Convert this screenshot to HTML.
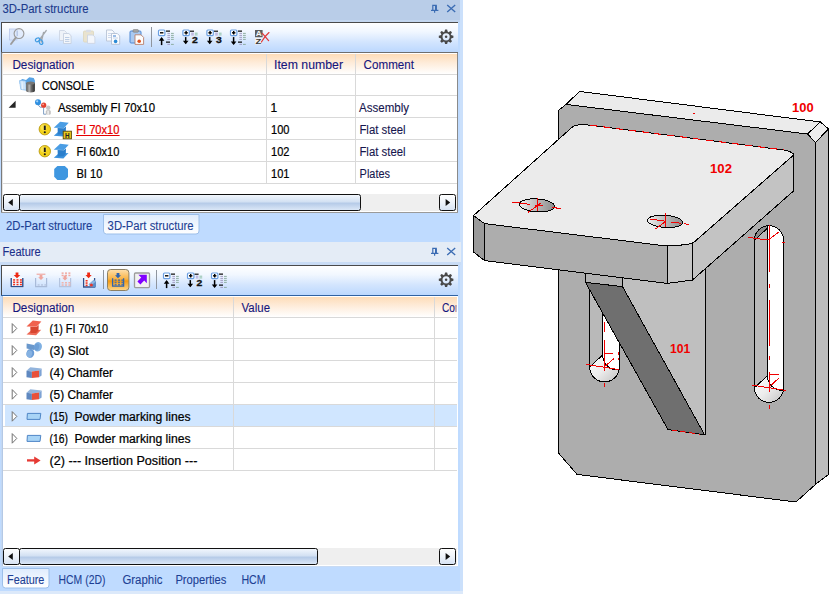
<!DOCTYPE html>
<html><head><meta charset="utf-8">
<style>
html,body{margin:0;padding:0;width:830px;height:594px;overflow:hidden;background:#fff}
svg{display:block;font-family:"Liberation Sans",sans-serif}
text{white-space:pre}
</style></head><body>
<svg width="830" height="594" viewBox="0 0 830 594">
<defs>
<linearGradient id="tbg" x1="0" y1="0" x2="0" y2="1"><stop offset="0" stop-color="#ffffff"/><stop offset="0.3" stop-color="#f1f7ff"/><stop offset="0.65" stop-color="#d3e5fe"/><stop offset="1" stop-color="#bcd8fe"/></linearGradient>
<linearGradient id="hdg" x1="0" y1="0" x2="0" y2="1"><stop offset="0" stop-color="#fddcb8"/><stop offset="0.45" stop-color="#feecda"/><stop offset="1" stop-color="#ffffff"/></linearGradient>
<linearGradient id="thumb" x1="0" y1="0" x2="0" y2="1"><stop offset="0" stop-color="#f4f8fd"/><stop offset="0.45" stop-color="#d3e1f3"/><stop offset="0.55" stop-color="#b6cbe8"/><stop offset="1" stop-color="#dde9f8"/></linearGradient>
<linearGradient id="sbtn" x1="0" y1="0" x2="0" y2="1"><stop offset="0" stop-color="#ffffff"/><stop offset="0.5" stop-color="#eef3fa"/><stop offset="1" stop-color="#d6e2f3"/></linearGradient>
<linearGradient id="tabg" x1="0" y1="0" x2="0" y2="1"><stop offset="0" stop-color="#dfecfd"/><stop offset="1" stop-color="#ffffff"/></linearGradient>
<linearGradient id="org" x1="0" y1="0" x2="0" y2="1"><stop offset="0" stop-color="#fde0ae"/><stop offset="0.45" stop-color="#f9b344"/><stop offset="0.55" stop-color="#f49a12"/><stop offset="1" stop-color="#fdd88e"/></linearGradient>
<linearGradient id="holeg" x1="0" y1="0" x2="1" y2="0"><stop offset="0" stop-color="#f0f0f0"/><stop offset="0.35" stop-color="#c8c8c8"/><stop offset="1" stop-color="#8c8c8c"/></linearGradient>
<linearGradient id="slotb" x1="0" y1="0" x2="1" y2="1"><stop offset="0" stop-color="#ffffff"/><stop offset="0.5" stop-color="#ececec"/><stop offset="1" stop-color="#bcbcbc"/></linearGradient>
</defs>

<rect x="0" y="0" width="463" height="594" fill="#bfdbff"/>
<rect x="460" y="0" width="3" height="594" fill="#cbe0fb"/>
<rect x="0" y="591" width="463" height="3" fill="#dce9fa"/>
<rect x="0" y="0" width="460" height="20" fill="#b9cde8"/>
<rect x="0" y="20" width="460" height="2" fill="#c3d6ef"/>
<text x="2.4" y="13.0" font-size="12" fill="#1c3a8c" stroke="#1c3a8c" stroke-width="0.1" textLength="86.2" lengthAdjust="spacingAndGlyphs" >3D-Part structure</text>
<rect x="0" y="242" width="461" height="20" fill="#e4ecf6"/>
<rect x="0" y="262" width="461" height="3" fill="#c9dcf5"/>
<text x="2.5" y="256.0" font-size="12" fill="#1c2f8a" stroke="#1c2f8a" stroke-width="0.1" textLength="38.2" lengthAdjust="spacingAndGlyphs" >Feature</text>
<g fill="none" stroke="#3b6cb3" stroke-width="1.2"><path d="M432.8 10.0V5.3999999999999995H436.2V10.0"/><path d="M435.9 5.3999999999999995V10.0" stroke-width="1.8"/><path d="M431 10.399999999999999H438.4"/><path d="M434.6 10.399999999999999V12.8"/></g>
<path d="M447.2 5L455.2 12M455.2 5L447.2 12" stroke="#3b6cb3" stroke-width="1.35" fill="none"/>
<g fill="none" stroke="#3b6cb3" stroke-width="1.2"><path d="M432.8 253.0V248.4H436.2V253.0"/><path d="M435.9 248.4V253.0" stroke-width="1.8"/><path d="M431 253.4H438.4"/><path d="M434.6 253.4V255.8"/></g>
<path d="M447.2 248L455.2 255M455.2 248L447.2 255" stroke="#3b6cb3" stroke-width="1.35" fill="none"/>
<rect x="2" y="23" width="456" height="29" fill="url(#tbg)"/>
<rect x="1" y="22" width="457" height="1" fill="#4a4a4a"/>
<rect x="1" y="22" width="1" height="31" fill="#4a4a4a"/>
<rect x="1" y="52" width="457" height="1" fill="#6e6e6e"/>
<rect x="2" y="266" width="456" height="29" fill="url(#tbg)"/>
<rect x="1" y="265" width="457" height="1" fill="#4a4a4a"/>
<rect x="1" y="265" width="1" height="31" fill="#4a4a4a"/>
<rect x="1" y="295" width="457" height="1" fill="#2f62a3"/>
<g transform="translate(446.1,36.8)">
<path d="M-1.7 -4.8L-1 -7.3H1L1.7 -4.8Z" fill="#484848" transform="rotate(0)"/>
<path d="M-1.7 -4.8L-1 -7.3H1L1.7 -4.8Z" fill="#484848" transform="rotate(45)"/>
<path d="M-1.7 -4.8L-1 -7.3H1L1.7 -4.8Z" fill="#484848" transform="rotate(90)"/>
<path d="M-1.7 -4.8L-1 -7.3H1L1.7 -4.8Z" fill="#484848" transform="rotate(135)"/>
<path d="M-1.7 -4.8L-1 -7.3H1L1.7 -4.8Z" fill="#484848" transform="rotate(180)"/>
<path d="M-1.7 -4.8L-1 -7.3H1L1.7 -4.8Z" fill="#484848" transform="rotate(225)"/>
<path d="M-1.7 -4.8L-1 -7.3H1L1.7 -4.8Z" fill="#484848" transform="rotate(270)"/>
<path d="M-1.7 -4.8L-1 -7.3H1L1.7 -4.8Z" fill="#484848" transform="rotate(315)"/>
<circle r="4.5" fill="none" stroke="#484848" stroke-width="1.8"/><circle r="1.25" fill="#484848"/></g>
<g transform="translate(446.1,279.8)">
<path d="M-1.7 -4.8L-1 -7.3H1L1.7 -4.8Z" fill="#484848" transform="rotate(0)"/>
<path d="M-1.7 -4.8L-1 -7.3H1L1.7 -4.8Z" fill="#484848" transform="rotate(45)"/>
<path d="M-1.7 -4.8L-1 -7.3H1L1.7 -4.8Z" fill="#484848" transform="rotate(90)"/>
<path d="M-1.7 -4.8L-1 -7.3H1L1.7 -4.8Z" fill="#484848" transform="rotate(135)"/>
<path d="M-1.7 -4.8L-1 -7.3H1L1.7 -4.8Z" fill="#484848" transform="rotate(180)"/>
<path d="M-1.7 -4.8L-1 -7.3H1L1.7 -4.8Z" fill="#484848" transform="rotate(225)"/>
<path d="M-1.7 -4.8L-1 -7.3H1L1.7 -4.8Z" fill="#484848" transform="rotate(270)"/>
<path d="M-1.7 -4.8L-1 -7.3H1L1.7 -4.8Z" fill="#484848" transform="rotate(315)"/>
<circle r="4.5" fill="none" stroke="#484848" stroke-width="1.8"/><circle r="1.25" fill="#484848"/></g>
<rect x="1" y="53" width="457" height="160" fill="#fff"/>
<rect x="1" y="53" width="1" height="160" fill="#7a7a7a"/>
<rect x="2" y="53" width="1" height="160" fill="#e4e4e4"/>
<rect x="457" y="53" width="1" height="160" fill="#8a8a8a"/>
<rect x="1" y="212" width="457" height="1" fill="#9a9a9a"/>
<rect x="3" y="54" width="454" height="20" fill="url(#hdg)"/>
<rect x="3" y="74" width="454" height="1" fill="#d9d9d9"/>
<rect x="3" y="95" width="454" height="1" fill="#d9d9d9"/>
<rect x="3" y="117" width="454" height="1" fill="#d9d9d9"/>
<rect x="3" y="139" width="454" height="1" fill="#d9d9d9"/>
<rect x="3" y="161" width="454" height="1" fill="#d9d9d9"/>
<rect x="3" y="183" width="454" height="1" fill="#d9d9d9"/>
<rect x="266" y="54" width="1" height="130" fill="#d9d9d9"/>
<rect x="355" y="54" width="1" height="130" fill="#d9d9d9"/>
<rect x="1" y="296" width="457" height="271" fill="#fff"/>
<rect x="1" y="296" width="1" height="271" fill="#c3d8f3"/>
<rect x="2" y="296" width="1" height="271" fill="#b4c9e6"/>
<rect x="457" y="296" width="1" height="271" fill="#ffffff"/>
<rect x="1" y="566" width="457" height="1" fill="#c9dbf3"/>
<rect x="3" y="297" width="454" height="20" fill="url(#hdg)"/>
<rect x="5" y="405" width="452" height="21" fill="#d0e6ff"/>
<rect x="3" y="317" width="454" height="1" fill="#d9d9d9"/>
<rect x="3" y="338" width="454" height="1" fill="#d9d9d9"/>
<rect x="3" y="360" width="454" height="1" fill="#d9d9d9"/>
<rect x="3" y="382" width="454" height="1" fill="#d9d9d9"/>
<rect x="3" y="404" width="454" height="1" fill="#d9d9d9"/>
<rect x="3" y="426" width="454" height="1" fill="#d9d9d9"/>
<rect x="3" y="448" width="454" height="1" fill="#d9d9d9"/>
<rect x="3" y="470" width="454" height="1" fill="#d9d9d9"/>
<rect x="233" y="297" width="1" height="174" fill="#d9d9d9"/>
<rect x="434" y="297" width="1" height="174" fill="#d9d9d9"/>
<text x="12.4" y="69.0" font-size="12" fill="#15157c" stroke="#15157c" stroke-width="0.1" textLength="62.0" lengthAdjust="spacingAndGlyphs" >Designation</text>
<text x="274.0" y="69.0" font-size="12" fill="#15157c" stroke="#15157c" stroke-width="0.1" textLength="69.0" lengthAdjust="spacingAndGlyphs" >Item number</text>
<text x="363.6" y="69.0" font-size="12" fill="#15157c" stroke="#15157c" stroke-width="0.1" textLength="50.4" lengthAdjust="spacingAndGlyphs" >Comment</text>
<text x="12.4" y="312.0" font-size="12" fill="#15157c" stroke="#15157c" stroke-width="0.1" textLength="62.0" lengthAdjust="spacingAndGlyphs" >Designation</text>
<text x="241.6" y="312.0" font-size="12" fill="#15157c" stroke="#15157c" stroke-width="0.1" textLength="28.4" lengthAdjust="spacingAndGlyphs" >Value</text>
<clipPath id="cc"><rect x="434" y="297" width="22.4" height="20"/></clipPath>
<text x="442.0" y="312.0" font-size="12" fill="#15157c" stroke="#15157c" stroke-width="0.1" textLength="44.0" lengthAdjust="spacingAndGlyphs" clip-path="url(#cc)">Comment</text>
<text x="42.0" y="90.0" font-size="12" fill="#000" stroke="#000" stroke-width="0.22" textLength="52.0" lengthAdjust="spacingAndGlyphs" >CONSOLE</text>
<text x="58.0" y="112.0" font-size="12" fill="#000" stroke="#000" stroke-width="0.22" textLength="97.0" lengthAdjust="spacingAndGlyphs" >Assembly FI 70x10</text>
<text x="76.2" y="134.0" font-size="12" fill="#e60000" stroke="#e60000" stroke-width="0.22" textLength="43.2" lengthAdjust="spacingAndGlyphs" >FI 70x10</text>
<rect x="76" y="135" width="43.6" height="1" fill="#e60000"/>
<text x="76.4" y="156.0" font-size="12" fill="#000" stroke="#000" stroke-width="0.22" textLength="43.0" lengthAdjust="spacingAndGlyphs" >FI 60x10</text>
<text x="76.4" y="178.0" font-size="12" fill="#000" stroke="#000" stroke-width="0.22" textLength="26.0" lengthAdjust="spacingAndGlyphs" >BI 10</text>
<text x="270.6" y="112" font-size="12" fill="#000" stroke="#000" stroke-width="0.22">1</text>
<text x="271.0" y="134.0" font-size="12" fill="#000" stroke="#000" stroke-width="0.22" textLength="18.4" lengthAdjust="spacingAndGlyphs" >100</text>
<text x="271.0" y="156.0" font-size="12" fill="#000" stroke="#000" stroke-width="0.22" textLength="18.4" lengthAdjust="spacingAndGlyphs" >102</text>
<text x="271.0" y="178.0" font-size="12" fill="#000" stroke="#000" stroke-width="0.22" textLength="18.4" lengthAdjust="spacingAndGlyphs" >101</text>
<text x="359.0" y="112.0" font-size="12" fill="#16164e" stroke="#16164e" stroke-width="0.1" textLength="50.0" lengthAdjust="spacingAndGlyphs" >Assembly</text>
<text x="359.4" y="134.0" font-size="12" fill="#16164e" stroke="#16164e" stroke-width="0.1" textLength="46.2" lengthAdjust="spacingAndGlyphs" >Flat steel</text>
<text x="359.4" y="156.0" font-size="12" fill="#16164e" stroke="#16164e" stroke-width="0.1" textLength="46.2" lengthAdjust="spacingAndGlyphs" >Flat steel</text>
<text x="359.6" y="178.0" font-size="12" fill="#16164e" stroke="#16164e" stroke-width="0.1" textLength="30.4" lengthAdjust="spacingAndGlyphs" >Plates</text>
<text x="49.6" y="333.0" font-size="12" fill="#000" stroke="#000" stroke-width="0.22" textLength="58.4" lengthAdjust="spacingAndGlyphs" >(1) FI 70x10</text>
<text x="49.6" y="355.0" font-size="12" fill="#000" stroke="#000" stroke-width="0.22" textLength="39.0" lengthAdjust="spacingAndGlyphs" >(3) Slot</text>
<text x="49.6" y="377.0" font-size="12" fill="#000" stroke="#000" stroke-width="0.22" textLength="63.4" lengthAdjust="spacingAndGlyphs" >(4) Chamfer</text>
<text x="49.6" y="399.0" font-size="12" fill="#000" stroke="#000" stroke-width="0.22" textLength="63.4" lengthAdjust="spacingAndGlyphs" >(5) Chamfer</text>
<text x="49.6" y="421.0" font-size="12" fill="#000" stroke="#000" stroke-width="0.22" textLength="18.4" lengthAdjust="spacingAndGlyphs" >(15)</text>
<text x="74.4" y="421.0" font-size="12" fill="#000" stroke="#000" stroke-width="0.22" textLength="116.2" lengthAdjust="spacingAndGlyphs" >Powder marking lines</text>
<text x="49.6" y="443.0" font-size="12" fill="#000" stroke="#000" stroke-width="0.22" textLength="18.4" lengthAdjust="spacingAndGlyphs" >(16)</text>
<text x="74.4" y="443.0" font-size="12" fill="#000" stroke="#000" stroke-width="0.22" textLength="116.2" lengthAdjust="spacingAndGlyphs" >Powder marking lines</text>
<text x="49.6" y="465.0" font-size="12" fill="#000" stroke="#000" stroke-width="0.22" textLength="147.8" lengthAdjust="spacingAndGlyphs" >(2) --- Insertion Position ---</text>
<rect x="3" y="194" width="454" height="17" fill="#efefef"/>
<rect x="3.5" y="194.5" width="16" height="16" rx="2" fill="url(#sbtn)" stroke="#111" stroke-width="1"/>
<path d="M8.2 202.5L12.8 199V206Z" fill="#111"/>
<rect x="19.5" y="194.5" width="341.0" height="16" rx="2" fill="url(#thumb)" stroke="#111" stroke-width="1"/>
<rect x="439.5" y="194.5" width="16" height="16" rx="2" fill="url(#sbtn)" stroke="#111" stroke-width="1"/>
<path d="M450.2 202.5L445.6 199V206Z" fill="#111"/>
<rect x="3" y="548" width="454" height="17" fill="#efefef"/>
<rect x="3.5" y="548.5" width="16" height="16" rx="2" fill="url(#sbtn)" stroke="#111" stroke-width="1"/>
<path d="M8.2 556.5L12.8 553V560Z" fill="#111"/>
<rect x="19.5" y="548.5" width="298.0" height="16" rx="2" fill="url(#thumb)" stroke="#111" stroke-width="1"/>
<rect x="439.5" y="548.5" width="16" height="16" rx="2" fill="url(#sbtn)" stroke="#111" stroke-width="1"/>
<path d="M450.2 556.5L445.6 553V560Z" fill="#111"/>
<text x="6.0" y="230.0" font-size="12" fill="#1d3f94" stroke="#1d3f94" stroke-width="0.1" textLength="86.4" lengthAdjust="spacingAndGlyphs" >2D-Part structure</text>
<path d="M103.5 214.5V231Q103.5 234 106.5 234H196Q199 234 199 231V214.5Z" fill="url(#tabg)" stroke="#9dbfe9" stroke-width="1"/>
<text x="107.6" y="230.0" font-size="12" fill="#1d3f94" stroke="#1d3f94" stroke-width="0.1" textLength="86.0" lengthAdjust="spacingAndGlyphs" >3D-Part structure</text>
<path d="M2.5 568.5V585Q2.5 588 5.5 588H46Q49 588 49 585V568.5Z" fill="url(#tabg)" stroke="#9dbfe9" stroke-width="1"/>
<text x="7.0" y="584.0" font-size="12" fill="#1d3f94" stroke="#1d3f94" stroke-width="0.1" textLength="37.4" lengthAdjust="spacingAndGlyphs" >Feature</text>
<text x="58.6" y="584.0" font-size="12" fill="#1d3f94" stroke="#1d3f94" stroke-width="0.1" textLength="46.8" lengthAdjust="spacingAndGlyphs" >HCM (2D)</text>
<text x="122.4" y="584.0" font-size="12" fill="#1d3f94" stroke="#1d3f94" stroke-width="0.1" textLength="40.0" lengthAdjust="spacingAndGlyphs" >Graphic</text>
<text x="175.4" y="584.0" font-size="12" fill="#1d3f94" stroke="#1d3f94" stroke-width="0.1" textLength="51.0" lengthAdjust="spacingAndGlyphs" >Properties</text>
<text x="241.4" y="584.0" font-size="12" fill="#1d3f94" stroke="#1d3f94" stroke-width="0.1" textLength="24.2" lengthAdjust="spacingAndGlyphs" >HCM</text>
<rect x="9.5" y="29" width="7.5" height="11" fill="#dbe6fa" stroke="#b8c8ea" stroke-width="0.8"/>
<circle cx="19" cy="33.6" r="4.9" fill="#dfeafc" fill-opacity="0.75" stroke="#9a9a9a" stroke-width="1.15"/>
<path d="M15.8 37.6L11 44" stroke="#9c9c9c" stroke-width="1.9" stroke-linecap="round"/>
<path d="M17.2 30.6V36" stroke="#9ab0d8" stroke-width="0.8"/>
<path d="M46.2 30.6L39 40.4M43.6 32.4L41.2 42" stroke="#a3a7ab" stroke-width="1.4" stroke-linecap="round"/>
<ellipse cx="37.6" cy="39.8" rx="2.3" ry="1.7" fill="none" stroke="#3f9be2" stroke-width="1.15" transform="rotate(-30 37.6 39.8)"/>
<ellipse cx="41" cy="42.2" rx="1.7" ry="2.3" fill="none" stroke="#3f9be2" stroke-width="1.15" transform="rotate(-20 41 42.2)"/>
<path d="M59.5 30.5h5l2 2v8h-7z" fill="#eef2f8" stroke="#cdd6e4" stroke-width="0.9"/>
<path d="M63.5 33.5h5.4l2.2 2.2v7.8h-7.6z" fill="#f4f7fb" stroke="#c5cfdf" stroke-width="0.9"/>
<path d="M65 37.5h4.4M65 39.5h4.4M65 41.4h4.4" stroke="#b5c7e2" stroke-width="0.9"/>
<rect x="83.5" y="31" width="10" height="11" rx="1" fill="#e9e3cf" stroke="#dcd5bd" stroke-width="0.8"/>
<rect x="86" y="29.8" width="5" height="2.4" rx="0.8" fill="#d9dde6"/>
<path d="M87.5 35h5.4l2 2v6.4h-7.4z" fill="#f3f6fb" stroke="#ccd5e3" stroke-width="0.9"/>
<path d="M106.5 30h5.5l2.2 2.2v8.8h-7.7z" fill="#f8fafd" stroke="#b9c4d6" stroke-width="0.9"/>
<path d="M108 33.5h4M108 35.5h4M108 37.5h3" stroke="#c3d2ea" stroke-width="0.8"/>
<path d="M111.5 33.5h5.8l2.4 2.4v8.4h-8.2z" fill="#fbfcfe" stroke="#b3bfd2" stroke-width="0.9"/>
<path d="M113 36h3" stroke="#3b7fd0" stroke-width="1"/><path d="M113 38h5" stroke="#b9cbe6" stroke-width="0.8"/>
<circle cx="115.6" cy="41.4" r="1.8" fill="#2b8bd6"/>
<rect x="130" y="31" width="11" height="12" rx="1" fill="#a9c9f1" stroke="#4f88d3" stroke-width="1"/>
<rect x="133" y="29.6" width="5.4" height="2.6" rx="0.8" fill="#a6a6a6" stroke="#7c7c7c" stroke-width="0.6"/>
<path d="M135 34.8h6l2.6 2.6v7h-8.6z" fill="#fdfdfd" stroke="#b8806c" stroke-width="0.9"/>
<circle cx="139.2" cy="41.2" r="1.8" fill="#e0511f"/>
<rect x="151" y="27" width="1" height="20" fill="#8f959e"/>
<rect x="158.5" y="30.0" width="6.4" height="5.6" rx="1" fill="#fff" stroke="#6b9fe2" stroke-width="1.2"/>
<path d="M160 32.8H163.4" stroke="#000" stroke-width="1.4"/>
<path d="M161.6 38.1V45.1" stroke="#000" stroke-width="1.5"/><path d="M158.79999999999998 40.7L161.6 37.1L164.4 40.7Z" fill="#000"/>
<path d="M166 31.2h4M166 42.2h4" stroke="#111" stroke-width="1.2"/>
<path d="M167.4 33.4h2.6" stroke="#9d94bd" stroke-width="0.9"/><path d="M171 33.4h2.8" stroke="#86a898" stroke-width="0.9"/>
<path d="M167.4 35.4h2.6" stroke="#9d94bd" stroke-width="0.9"/><path d="M171 35.4h2.8" stroke="#86a898" stroke-width="0.9"/>
<path d="M167.4 37.4h2.6" stroke="#9d94bd" stroke-width="0.9"/><path d="M171 37.4h2.8" stroke="#86a898" stroke-width="0.9"/>
<path d="M167.4 39.4h2.6" stroke="#9d94bd" stroke-width="0.9"/><path d="M171 39.4h2.8" stroke="#86a898" stroke-width="0.9"/>
<path d="M167.4 44.4h2.6" stroke="#9d94bd" stroke-width="0.9"/><path d="M171 44.4h2.8" stroke="#86a898" stroke-width="0.9"/>
<rect x="182.9" y="30.0" width="6.4" height="5.6" rx="1" fill="#fff" stroke="#6b9fe2" stroke-width="1.2"/>
<path d="M184.4 32.8H187.8" stroke="#000" stroke-width="1.4"/>
<path d="M186.1 31.1V34.5" stroke="#000" stroke-width="1.4"/>
<path d="M185.70000000000002 37.1V43.3" stroke="#000" stroke-width="1.5"/><path d="M182.9 40.699999999999996L185.70000000000002 44.3L188.50000000000003 40.699999999999996Z" fill="#000"/>
<path d="M190.0 31.2h4" stroke="#111" stroke-width="1.2"/>
<path d="M191.2 33.2h2.6" stroke="#a99bd0" stroke-width="1"/><path d="M194.8 33.2h2.8" stroke="#8fc0a8" stroke-width="1"/>
<path d="M191.2 34.9h2.6" stroke="#a99bd0" stroke-width="1"/><path d="M194.8 34.9h2.8" stroke="#8fc0a8" stroke-width="1"/>
<text x="192.0" y="43.1" font-size="9.5" font-weight="bold" fill="#111" stroke="#111" stroke-width="0.3" textLength="5.8" lengthAdjust="spacingAndGlyphs">2</text>
<rect x="206.9" y="30.0" width="6.4" height="5.6" rx="1" fill="#fff" stroke="#6b9fe2" stroke-width="1.2"/>
<path d="M208.4 32.8H211.8" stroke="#000" stroke-width="1.4"/>
<path d="M210.1 31.1V34.5" stroke="#000" stroke-width="1.4"/>
<path d="M209.70000000000002 37.1V43.3" stroke="#000" stroke-width="1.5"/><path d="M206.9 40.699999999999996L209.70000000000002 44.3L212.50000000000003 40.699999999999996Z" fill="#000"/>
<path d="M214.0 31.2h4" stroke="#111" stroke-width="1.2"/>
<path d="M215.2 33.2h2.6" stroke="#a99bd0" stroke-width="1"/><path d="M218.8 33.2h2.8" stroke="#8fc0a8" stroke-width="1"/>
<path d="M215.2 34.9h2.6" stroke="#a99bd0" stroke-width="1"/><path d="M218.8 34.9h2.8" stroke="#8fc0a8" stroke-width="1"/>
<text x="216.0" y="43.1" font-size="9.5" font-weight="bold" fill="#111" stroke="#111" stroke-width="0.3" textLength="5.8" lengthAdjust="spacingAndGlyphs">3</text>
<rect x="230.5" y="30.0" width="6.4" height="5.6" rx="1" fill="#fff" stroke="#6b9fe2" stroke-width="1.2"/>
<path d="M232 32.8H235.4" stroke="#000" stroke-width="1.4"/>
<path d="M233.7 31.1V34.5" stroke="#000" stroke-width="1.4"/>
<path d="M233.6 37.1V44.1" stroke="#000" stroke-width="1.5"/><path d="M230.79999999999998 41.5L233.6 45.1L236.4 41.5Z" fill="#000"/>
<path d="M238 31.2h4M238 42.2h4" stroke="#111" stroke-width="1.2"/>
<path d="M239.4 33.4h2.6" stroke="#9d94bd" stroke-width="0.9"/><path d="M243 33.4h2.8" stroke="#86a898" stroke-width="0.9"/>
<path d="M239.4 35.4h2.6" stroke="#9d94bd" stroke-width="0.9"/><path d="M243 35.4h2.8" stroke="#86a898" stroke-width="0.9"/>
<path d="M239.4 37.4h2.6" stroke="#9d94bd" stroke-width="0.9"/><path d="M243 37.4h2.8" stroke="#86a898" stroke-width="0.9"/>
<path d="M239.4 39.4h2.6" stroke="#9d94bd" stroke-width="0.9"/><path d="M243 39.4h2.8" stroke="#86a898" stroke-width="0.9"/>
<path d="M239.4 44.4h2.6" stroke="#9d94bd" stroke-width="0.9"/><path d="M243 44.4h2.8" stroke="#86a898" stroke-width="0.9"/>
<rect x="255" y="30" width="7.6" height="7.2" fill="#5e5e5e"/>
<text x="255.8" y="36.4" font-size="7.5" font-weight="bold" fill="#f4f4f4" textLength="6" lengthAdjust="spacingAndGlyphs">A</text>
<rect x="255" y="38" width="7" height="6.4" fill="#f2f2f2"/>
<text x="255.4" y="44" font-size="7.5" font-weight="bold" fill="#3a3a3a" textLength="5.8" lengthAdjust="spacingAndGlyphs">Z</text>
<path d="M262.4 33.4L268.6 40.6M269 32.6Q265 36 261.4 42" stroke="#e03a3a" stroke-width="1.25" fill="none" stroke-linecap="round"/>
<rect x="10" y="277" width="13.6" height="11" fill="#fbfcfe" fill-opacity="0.7"/>
<path d="M11.2 278V286.6H22.799999999999997V278" fill="none" stroke="#2c4f8e" stroke-width="1.4"/>
<rect x="13.1" y="279.2" width="2" height="1.5" fill="#f0301c" fill-opacity="1"/>
<rect x="13.1" y="281.5" width="2" height="1.5" fill="#f0301c" fill-opacity="1"/>
<rect x="13.1" y="283.8" width="2" height="1.5" fill="#f0301c" fill-opacity="1"/>
<rect x="16.5" y="279.2" width="2" height="1.5" fill="#f0301c" fill-opacity="1"/>
<rect x="16.5" y="281.5" width="2" height="1.5" fill="#f0301c" fill-opacity="1"/>
<rect x="16.5" y="283.8" width="2" height="1.5" fill="#f0301c" fill-opacity="1"/>
<rect x="19.9" y="279.2" width="2" height="1.5" fill="#f0301c" fill-opacity="1"/>
<rect x="19.9" y="281.5" width="2" height="1.5" fill="#f0301c" fill-opacity="1"/>
<rect x="19.9" y="283.8" width="2" height="1.5" fill="#f0301c" fill-opacity="1"/>
<path d="M15.6 272.4h2.8v2.61h1.9L17 278.2L13.7 275.01h1.9z" fill="#ee2a14"/>
<path d="M35.6 278V286.6H46.6V278" fill="none" stroke="#a9bbd9" stroke-width="1.2"/>
<path d="M36.6 274.2h8.8" stroke="#ee9a92" stroke-width="1"/>
<path d="M39.6 275h2.8v2.25h1.4L41 280L38.2 277.25h1.4z" fill="#eea59d"/>
<rect x="37.6" y="284.2" width="2" height="1.5" fill="#b9c8e2" fill-opacity="1"/>
<rect x="41.0" y="284.2" width="2" height="1.5" fill="#b9c8e2" fill-opacity="1"/>
<rect x="44.4" y="284.2" width="2" height="1.5" fill="#b9c8e2" fill-opacity="1"/>
<path d="M59.6 278V286.6H70.6V278" fill="none" stroke="#b4c4df" stroke-width="1.2"/>
<rect x="61.6" y="272.4" width="2" height="1.5" fill="#f0aaa2" fill-opacity="1"/>
<rect x="61.6" y="274.7" width="2" height="1.5" fill="#f0aaa2" fill-opacity="1"/>
<rect x="65.0" y="272.4" width="2" height="1.5" fill="#f0aaa2" fill-opacity="1"/>
<rect x="65.0" y="274.7" width="2" height="1.5" fill="#f0aaa2" fill-opacity="1"/>
<rect x="68.4" y="272.4" width="2" height="1.5" fill="#f0aaa2" fill-opacity="1"/>
<rect x="68.4" y="274.7" width="2" height="1.5" fill="#f0aaa2" fill-opacity="1"/>
<path d="M63.6 275.6h2.8v2.25h1.4L65 280.6L62.2 277.85h1.4z" fill="#eea59d"/>
<rect x="61.6" y="282.0" width="2" height="1.5" fill="#f0b4ac" fill-opacity="1"/>
<rect x="61.6" y="284.3" width="2" height="1.5" fill="#f0b4ac" fill-opacity="1"/>
<rect x="65.0" y="282.0" width="2" height="1.5" fill="#f0b4ac" fill-opacity="1"/>
<rect x="65.0" y="284.3" width="2" height="1.5" fill="#f0b4ac" fill-opacity="1"/>
<rect x="68.4" y="282.0" width="2" height="1.5" fill="#f0b4ac" fill-opacity="1"/>
<rect x="68.4" y="284.3" width="2" height="1.5" fill="#f0b4ac" fill-opacity="1"/>
<rect x="82.6" y="277" width="13" height="11" fill="#fbfcfe" fill-opacity="0.7"/>
<path d="M83.6 278V287H94.6V278" fill="none" stroke="#2c4f8e" stroke-width="1.3"/>
<path d="M87.19999999999999 272.6h2.8v2.52h1.7000000000000002L88.6 278.20000000000005L85.5 275.12h1.7000000000000002z" fill="#ee2a14"/>
<rect x="85.6" y="280.0" width="2" height="1.5" fill="#f0301c" fill-opacity="1"/>
<rect x="85.6" y="282.3" width="2" height="1.5" fill="#f0301c" fill-opacity="1"/>
<rect x="85.6" y="284.6" width="2" height="1.5" fill="#f0301c" fill-opacity="1"/>
<path d="M88.6 284.6l5-4.6 2.4 1.4v5.8h-5z" fill="#5e8fc8"/><path d="M88.6 284.6l5-4.6 2.4 1.4-5 4.2z" fill="#8db4e2"/><circle cx="91.4" cy="285" r="1.5" fill="#e8382a"/>
<rect x="103" y="270" width="1" height="19" fill="#8f959e"/>
<rect x="107.5" y="269.5" width="21.4" height="21" rx="3.2" fill="url(#org)" stroke="#8d8064" stroke-width="1"/>
<path d="M112.6 278.2V286.2H123.6V278.2" fill="none" stroke="#2f64ae" stroke-width="1.3"/>
<path d="M116.6 273h2.8v2.3400000000000003h1.6L118 278.2L115.0 275.34h1.6z" fill="#2f64ae"/>
<rect x="114.6" y="279.4" width="2" height="1.5" fill="#3b6bb0" fill-opacity="0.85"/>
<rect x="114.6" y="281.7" width="2" height="1.5" fill="#3b6bb0" fill-opacity="0.85"/>
<rect x="114.6" y="284.0" width="2" height="1.5" fill="#3b6bb0" fill-opacity="0.85"/>
<rect x="118.0" y="279.4" width="2" height="1.5" fill="#3b6bb0" fill-opacity="0.85"/>
<rect x="118.0" y="281.7" width="2" height="1.5" fill="#3b6bb0" fill-opacity="0.85"/>
<rect x="118.0" y="284.0" width="2" height="1.5" fill="#3b6bb0" fill-opacity="0.85"/>
<rect x="121.39999999999999" y="279.4" width="2" height="1.5" fill="#3b6bb0" fill-opacity="0.85"/>
<rect x="121.39999999999999" y="281.7" width="2" height="1.5" fill="#3b6bb0" fill-opacity="0.85"/>
<rect x="121.39999999999999" y="284.0" width="2" height="1.5" fill="#3b6bb0" fill-opacity="0.85"/>
<rect x="134.5" y="273" width="15" height="14.6" rx="1" fill="#f1f1f1" stroke="#9b9b9b" stroke-width="1.3"/>
<path d="M138.4 274.8h8.4v8.4l-2.6-2.6-3.8 3.8-3-3 3.8-3.8z" fill="#8000ff"/>
<rect x="156" y="270" width="1" height="19" fill="#8f959e"/>
<rect x="163.5" y="273.0" width="6.4" height="5.6" rx="1" fill="#fff" stroke="#6b9fe2" stroke-width="1.2"/>
<path d="M165 275.8H168.4" stroke="#000" stroke-width="1.4"/>
<path d="M166.6 281.1V288.1" stroke="#000" stroke-width="1.5"/><path d="M163.79999999999998 283.70000000000005L166.6 280.1L169.4 283.70000000000005Z" fill="#000"/>
<path d="M171 274.2h4M171 285.2h4" stroke="#111" stroke-width="1.2"/>
<path d="M172.4 276.4h2.6" stroke="#9d94bd" stroke-width="0.9"/><path d="M176 276.4h2.8" stroke="#86a898" stroke-width="0.9"/>
<path d="M172.4 278.4h2.6" stroke="#9d94bd" stroke-width="0.9"/><path d="M176 278.4h2.8" stroke="#86a898" stroke-width="0.9"/>
<path d="M172.4 280.4h2.6" stroke="#9d94bd" stroke-width="0.9"/><path d="M176 280.4h2.8" stroke="#86a898" stroke-width="0.9"/>
<path d="M172.4 282.4h2.6" stroke="#9d94bd" stroke-width="0.9"/><path d="M176 282.4h2.8" stroke="#86a898" stroke-width="0.9"/>
<path d="M172.4 287.4h2.6" stroke="#9d94bd" stroke-width="0.9"/><path d="M176 287.4h2.8" stroke="#86a898" stroke-width="0.9"/>
<rect x="187.5" y="273.0" width="6.4" height="5.6" rx="1" fill="#fff" stroke="#6b9fe2" stroke-width="1.2"/>
<path d="M189 275.8H192.4" stroke="#000" stroke-width="1.4"/>
<path d="M190.7 274.1V277.5" stroke="#000" stroke-width="1.4"/>
<path d="M190.3 280.1V286.3" stroke="#000" stroke-width="1.5"/><path d="M187.5 283.7L190.3 287.3L193.10000000000002 283.7Z" fill="#000"/>
<path d="M194.6 274.2h4" stroke="#111" stroke-width="1.2"/>
<path d="M195.79999999999998 276.2h2.6" stroke="#a99bd0" stroke-width="1"/><path d="M199.4 276.2h2.8" stroke="#8fc0a8" stroke-width="1"/>
<path d="M195.79999999999998 277.9h2.6" stroke="#a99bd0" stroke-width="1"/><path d="M199.4 277.9h2.8" stroke="#8fc0a8" stroke-width="1"/>
<text x="196.6" y="286.1" font-size="9.5" font-weight="bold" fill="#111" stroke="#111" stroke-width="0.3" textLength="5.8" lengthAdjust="spacingAndGlyphs">2</text>
<rect x="211.5" y="273.0" width="6.4" height="5.6" rx="1" fill="#fff" stroke="#6b9fe2" stroke-width="1.2"/>
<path d="M213 275.8H216.4" stroke="#000" stroke-width="1.4"/>
<path d="M214.7 274.1V277.5" stroke="#000" stroke-width="1.4"/>
<path d="M214.6 280.1V287.1" stroke="#000" stroke-width="1.5"/><path d="M211.79999999999998 284.5L214.6 288.1L217.4 284.5Z" fill="#000"/>
<path d="M219 274.2h4M219 285.2h4" stroke="#111" stroke-width="1.2"/>
<path d="M220.4 276.4h2.6" stroke="#9d94bd" stroke-width="0.9"/><path d="M224 276.4h2.8" stroke="#86a898" stroke-width="0.9"/>
<path d="M220.4 278.4h2.6" stroke="#9d94bd" stroke-width="0.9"/><path d="M224 278.4h2.8" stroke="#86a898" stroke-width="0.9"/>
<path d="M220.4 280.4h2.6" stroke="#9d94bd" stroke-width="0.9"/><path d="M224 280.4h2.8" stroke="#86a898" stroke-width="0.9"/>
<path d="M220.4 282.4h2.6" stroke="#9d94bd" stroke-width="0.9"/><path d="M224 282.4h2.8" stroke="#86a898" stroke-width="0.9"/>
<path d="M220.4 287.4h2.6" stroke="#9d94bd" stroke-width="0.9"/><path d="M224 287.4h2.8" stroke="#86a898" stroke-width="0.9"/>
<path d="M19.6 80.8L22.4 78.9L26 80L29.3 77.3L33.7 78L34.9 80.6V84H19.8Z" fill="#57a2e4"/>
<path d="M19.6 80.6L25.6 81L26.2 90.2L20.8 89.4Z" fill="#cfe4f9" stroke="#8fc2f0" stroke-width="0.8"/>
<path d="M22 81.2L22.6 89.4" stroke="#e8f3fd" stroke-width="1"/>
<linearGradient id="cyl" x1="0" y1="0" x2="1" y2="0"><stop offset="0" stop-color="#4e4e4e"/><stop offset="0.35" stop-color="#b4b4b4"/><stop offset="0.6" stop-color="#6a6a6a"/><stop offset="1" stop-color="#2c2c2c"/></linearGradient>
<path d="M26.2 83v7.8a4.35 1.6 0 0 0 8.7 0v-7.8z" fill="url(#cyl)"/><ellipse cx="30.55" cy="83" rx="4.35" ry="1.6" fill="#777"/>
<path d="M15.6 100.8V107.8H8.6Z" fill="#262626"/>
<path d="M38 104.6L40 107.2H42.4M43.6 107.4V114.2H46" stroke="#7f9fc4" stroke-width="1" fill="none"/>
<circle cx="38" cy="102.3" r="3" fill="#2f8fe0"/><circle cx="37.2" cy="101.3" r="1.1" fill="#a6d4fa"/>
<circle cx="43.7" cy="105.2" r="2.6" fill="#e2402f"/><circle cx="43.1" cy="104.4" r="0.9" fill="#f6a69c"/>
<circle cx="48.2" cy="107.8" r="2.2" fill="#c9c9c9"/><rect x="45.8" y="110" width="5" height="4.8" rx="1.6" fill="#c4c4c4"/><rect x="47.4" y="110.6" width="1.4" height="4.2" fill="#f2f2f2"/>
<circle cx="44.8" cy="129.2" r="5.7" fill="#f3d21c" stroke="#b99a10" stroke-width="0.9"/>
<circle cx="43.599999999999994" cy="127.6" r="3" fill="#fbe866" fill-opacity="0.7"/>
<path d="M44.8 125.6V130.0" stroke="#1a1a1a" stroke-width="1.9"/><circle cx="44.8" cy="132.2" r="1.05" fill="#1a1a1a"/>
<circle cx="44.8" cy="151.2" r="5.7" fill="#f3d21c" stroke="#b99a10" stroke-width="0.9"/>
<circle cx="43.599999999999994" cy="149.6" r="3" fill="#fbe866" fill-opacity="0.7"/>
<path d="M44.8 147.6V152.0" stroke="#1a1a1a" stroke-width="1.9"/><circle cx="44.8" cy="154.2" r="1.05" fill="#1a1a1a"/>
<polygon points="53.8,135.7 58.3,131.8 68.5,131.1 63.4,136.6" fill="#3d93de"/>
<polygon points="57.6,128.0 63.8,128.2 66.0,126.4 65.8,131.8 63.4,134.2 57.8,134.4" fill="#2b7fcc"/>
<polygon points="53.8,127.7 60.1,121.8 68.7,122.8 63.9,128.1" fill="#4a9de4"/>
<polygon points="53.8,157.7 58.3,153.8 68.5,153.1 63.4,158.6" fill="#3d93de"/>
<polygon points="57.6,150.0 63.8,150.2 66.0,148.4 65.8,153.8 63.4,156.2 57.8,156.4" fill="#2b7fcc"/>
<polygon points="53.8,149.7 60.1,143.8 68.7,144.8 63.9,150.1" fill="#4a9de4"/>
<rect x="63.2" y="131.2" width="8.2" height="7.6" fill="#e8c81e" stroke="#5a4a08" stroke-width="0.9"/>
<text x="65" y="137.6" font-size="6.5" font-weight="bold" fill="#222" textLength="4.6" lengthAdjust="spacingAndGlyphs">H</text>
<path d="M57.4 166h7.4l3.2 3v8l-3 3h-7.6l-3.2-3.2v-7.8z" fill="#3f97e0"/>
<path d="M12.2 323.59999999999997V333.2L16.8 328.4Z" fill="#fff" stroke="#727272" stroke-width="1" stroke-linejoin="round"/>
<path d="M12.2 345.59999999999997V355.2L16.8 350.4Z" fill="#fff" stroke="#727272" stroke-width="1" stroke-linejoin="round"/>
<path d="M12.2 367.59999999999997V377.2L16.8 372.4Z" fill="#fff" stroke="#727272" stroke-width="1" stroke-linejoin="round"/>
<path d="M12.2 389.59999999999997V399.2L16.8 394.4Z" fill="#fff" stroke="#727272" stroke-width="1" stroke-linejoin="round"/>
<path d="M12.2 411.59999999999997V421.2L16.8 416.4Z" fill="#fff" stroke="#727272" stroke-width="1" stroke-linejoin="round"/>
<path d="M12.2 433.59999999999997V443.2L16.8 438.4Z" fill="#fff" stroke="#727272" stroke-width="1" stroke-linejoin="round"/>
<polygon points="26.5,334.4 31.0,330.5 41.2,329.8 36.1,335.3" fill="#ee6a56"/>
<polygon points="30.3,326.7 36.5,326.9 38.7,325.1 38.5,330.5 36.1,332.9 30.5,333.1" fill="#d84630"/>
<polygon points="26.5,326.4 32.8,320.5 41.4,321.5 36.6,326.8" fill="#f0624e"/>
<path d="M26.6 343.6L34 345V350L26.6 348.4Z" fill="#6a98cc"/>
<ellipse cx="37.9" cy="346.8" rx="4" ry="4.8" fill="#7fb0e2" transform="rotate(15 37.9 346.8)"/><ellipse cx="36.6" cy="347" rx="2.6" ry="3.6" fill="#6d9fd6" transform="rotate(15 36.6 347)"/>
<ellipse cx="30.3" cy="353.4" rx="3.9" ry="4.5" fill="#6a9cd6" transform="rotate(15 30.3 353.4)"/><ellipse cx="29.4" cy="353.8" rx="2.8" ry="3.5" fill="#86b2e2" transform="rotate(15 29.4 353.8)"/>
<polygon points="26.5,370.8 30.3,367.2 41.6,368.6 39.1,370.4 31.9,371.4" fill="#93b4dc"/>
<polygon points="26.5,370.8 31.9,371.4 31.9,378.0 26.5,377.3" fill="#5f88c0"/>
<polygon points="31.9,371.4 39.1,370.4 39.1,377.2 31.9,378.0" fill="#e8503a"/>
<polygon points="39.1,370.4 41.6,368.6 41.6,375.5 39.1,377.2" fill="#7ea3d4"/>
<polygon points="26.5,392.8 30.3,389.2 41.6,390.6 39.1,392.4 31.9,393.4" fill="#93b4dc"/>
<polygon points="26.5,392.8 31.9,393.4 31.9,400.0 26.5,399.3" fill="#5f88c0"/>
<polygon points="31.9,393.4 39.1,392.4 39.1,399.2 31.9,400.0" fill="#e8503a"/>
<polygon points="39.1,392.4 41.6,390.6 41.6,397.5 39.1,399.2" fill="#7ea3d4"/>
<path d="M27.4 413.40000000000003h13.4l-0.8 6h-13z" fill="#a8d4f6" stroke="#4f86c6" stroke-width="1" stroke-linejoin="round"/>
<path d="M27.4 435.40000000000003h13.4l-0.8 6h-13z" fill="#a8d4f6" stroke="#4f86c6" stroke-width="1" stroke-linejoin="round"/>
<path d="M27 460.4h8.6" stroke="#e63a34" stroke-width="2.3"/><path d="M34.2 456.4L40.6 460.4L34.2 464.4Z" fill="#e63a34"/>
<g id="model" stroke-linecap="round" shape-rendering="crispEdges">
<polygon points="579.6,91.4 820.4,122.0 807.4,134.0 566.0,104.4" fill="#ebebeb" stroke="#000" stroke-width="1" stroke-linejoin="round"/>
<polygon points="820.4,122.0 828.5,129.0 815.5,142.4 807.4,134.0" fill="#ededed" stroke="#000" stroke-width="1" stroke-linejoin="round"/>
<polygon points="815.5,142.4 828.5,129.0 828.5,474.4 815.5,484.4" fill="#bdbdbd" stroke="#000" stroke-width="1" stroke-linejoin="round"/>
<polygon points="566.0,104.4 807.4,134.0 815.5,142.4 815.5,484.4 796.0,502.0 577.0,474.4 558.5,453.0 558.5,110.4" fill="#adadad" stroke="#000" stroke-width="1" stroke-linejoin="round"/>
<clipPath id="s2"><path d="M754.4 240.2A14.6 14.6 0 0 1 783.6 240.2V387.8A14.6 14.6 0 0 1 754.4 387.8Z"/></clipPath>
<path d="M754.4 240.2A14.6 14.6 0 0 1 783.6 240.2V387.8A14.6 14.6 0 0 1 754.4 387.8Z" fill="url(#slotb)" stroke="none"/>
<g clip-path="url(#s2)">
<rect x="753.4" y="224.6" width="16.6" height="15.6" fill="#8c8c8c"/>
<rect x="753.4" y="373.8" width="31.2" height="30.6" fill="url(#slotb)"/>
<polygon points="754.4,240.2 767.4,228.2 767.4,375.8 754.4,387.8" fill="#b9b9b9" stroke="#000" stroke-width="1"/>
<path d="M767.4 228.2A14.6 14.6 0 0 1 796.6 228.2V375.8A14.6 14.6 0 0 1 767.4 375.8Z" fill="#fff" stroke="#000" stroke-width="1"/>
</g>
<path d="M754.4 240.2A14.6 14.6 0 0 1 783.6 240.2V387.8A14.6 14.6 0 0 1 754.4 387.8Z" fill="none" stroke="#000" stroke-width="1"/>
<clipPath id="s1"><path d="M589.6 219.2A14.9 14.9 0 0 1 619.4 219.2V367.0A14.9 14.9 0 0 1 589.6 367.0Z"/></clipPath>
<path d="M589.6 219.2A14.9 14.9 0 0 1 619.4 219.2V367.0A14.9 14.9 0 0 1 589.6 367.0Z" fill="url(#slotb)" stroke="none"/>
<g clip-path="url(#s1)">
<rect x="588.6" y="203.3" width="16.9" height="15.9" fill="#8c8c8c"/>
<rect x="588.6" y="353.0" width="31.8" height="30.9" fill="url(#slotb)"/>
<polygon points="589.6,219.2 602.6,207.2 602.6,355.0 589.6,367.0" fill="#b9b9b9" stroke="#000" stroke-width="1"/>
<path d="M602.6 207.2A14.9 14.9 0 0 1 632.4 207.2V355.0A14.9 14.9 0 0 1 602.6 355.0Z" fill="#fff" stroke="#000" stroke-width="1"/>
</g>
<path d="M589.6 219.2A14.9 14.9 0 0 1 619.4 219.2V367.0A14.9 14.9 0 0 1 589.6 367.0Z" fill="none" stroke="#000" stroke-width="1"/>
<g stroke="#f00000" stroke-width="1" fill="none">
<path d="M748 237.4L768 240L778.4 232.4"/>
<path d="M769 225V272M769 284V288M769 300V346M769 356V360M769 372V392M769.4 405V409"/>
<path d="M782 242L785 243"/>
<path d="M752 385L786 390.5M769 374.6H779M768 388L779 378"/>
<path d="M604.4 322V332M604.4 340V371M604.4 383V386.4"/>
<path d="M586.4 364.4L619 369.6M604.4 353.6H613M604 367L614 358.6"/>
<path d="M618.4 352V360" stroke-dasharray="3 3"/>
</g>
<polygon points="622.5,272.0 705.5,258.0 705.5,435.0 704.6,434.8 622.5,286.6" fill="#bfbfbf" stroke="#000" stroke-width="1" stroke-linejoin="round"/>
<polygon points="585.5,267.0 622.5,272.0 622.5,286.6 585.5,282.4" fill="#b2b2b2" stroke="#000" stroke-width="1" stroke-linejoin="round"/>
<polygon points="585.5,282.4 622.5,286.6 704.6,434.8 668.0,429.6" fill="#6f6f6f" stroke="#000" stroke-width="1" stroke-linejoin="round"/>
<path d="M672 430.2L700 434.2" stroke="#f00000" stroke-width="1" stroke-dasharray="5 4" fill="none"/>
<polygon points="473.5,215.6 484.5,223.6 484.5,260.6 473.5,252.0" fill="#9a9a9a" stroke="#000" stroke-width="1" stroke-linejoin="round"/>
<polygon points="484.5,223.6 667.5,246.0 667.5,283.4 484.5,260.6" fill="#adadad" stroke="#000" stroke-width="1" stroke-linejoin="round"/>
<polygon points="667.5,246.0 692.5,243.6 692.5,280.0 667.5,283.4" fill="#c6c6c6" stroke="#000" stroke-width="1" stroke-linejoin="round"/>
<polygon points="692.5,243.6 793.5,155.0 793.5,191.0 692.5,280.0" fill="#c3c3c3" stroke="#000" stroke-width="1" stroke-linejoin="round"/>
<path d="M473.5 215.6L484.5 223.6L660 245.2Q667 246.2 675 245.6L686 244.6Q692.5 243.8 696 240.4L793.5 155.2Q794.5 152.4 784 150L590 125.2Q579 123.6 573 126.4Z" fill="#ebebeb" stroke="#000" stroke-width="1" stroke-linejoin="round"/>
<path d="M590 125.2L784 150" stroke="#f00000" stroke-width="1.1" stroke-dasharray="7 6" stroke-linecap="butt" fill="none"/>
<ellipse cx="537" cy="205.4" rx="17.6" ry="6.5" fill="url(#holeg)" stroke="#000" stroke-width="1" transform="rotate(4 537 205.4)"/>
<ellipse cx="665" cy="221.4" rx="17.6" ry="6.1" fill="url(#holeg)" stroke="#000" stroke-width="1" transform="rotate(4 665 221.4)"/>
<g stroke="#f00000" stroke-width="1" fill="none">
<path d="M512 202L530 204.4M535 205L543 206M552 207.4L561 208.6M537 197.6V211M528 212.4L541 203"/>
<path d="M650 219L664 221M671 222L681 223.2M684 223.8L689 224.4M665.6 213V227M656 228.6L666 221"/>
<path d="M693.2 113.4h1"/>
</g>
<text x="792" y="111.6" font-size="13" font-weight="bold" fill="#f00000" stroke="none" textLength="21.6" lengthAdjust="spacingAndGlyphs">100</text>
<text x="710" y="172.6" font-size="13" font-weight="bold" fill="#f00000" stroke="none" textLength="22.0" lengthAdjust="spacingAndGlyphs">102</text>
<text x="670" y="352.6" font-size="13" font-weight="bold" fill="#f00000" stroke="none" textLength="20.4" lengthAdjust="spacingAndGlyphs">101</text>
</g>
</svg></body></html>
